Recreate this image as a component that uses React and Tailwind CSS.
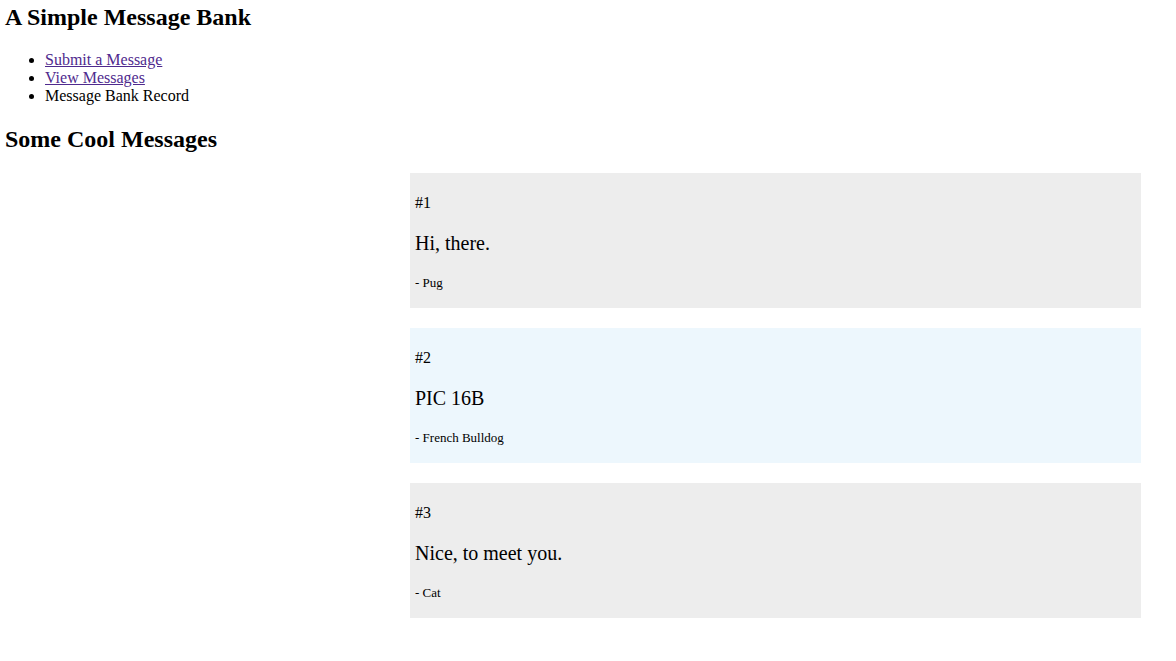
import React from "react";

const messages = [
  { id: 1, text: "Hi, there.", author: "Pug", bg: "bg-[#ededed]" },
  { id: 2, text: "PIC 16B", author: "French Bulldog", bg: "bg-[#edf7fd]" },
  { id: 3, text: "Nice, to meet you.", author: "Cat", bg: "bg-[#ededed]" },
];

const App = () => {
  return (
    <div className="min-h-screen bg-white px-[5px] pt-[4px] font-['Liberation_Serif','Times_New_Roman',serif] text-black">
      <h1 className="text-[24px] font-bold leading-[27px]">A Simple Message Bank</h1>
      <ul className="mt-[20px] list-disc pl-[40px] text-[16px] leading-[18px]">
        <li>
          <a href="#" className="text-[#4f2a8e] underline">
            Submit a Message
          </a>
        </li>
        <li>
          <a href="#" className="text-[#4f2a8e] underline">
            View Messages
          </a>
        </li>
        <li>Message Bank Record</li>
      </ul>
      <h2 className="mt-[21px] text-[24px] font-bold leading-[27px]">Some Cool Messages</h2>

      <div className="ml-[405px] mt-[20px] flex w-[731px] flex-col gap-[20px]">
        {messages.map((m) => (
          <div key={m.id} className={`${m.bg} px-[5px] pt-[21px] pb-[18px]`}>
            <p className="text-[16px] leading-[18px]">#{m.id}</p>
            <p className="mt-[20px] text-[20px] leading-[23px]">{m.text}</p>
            <p className="mt-[20px] text-[13px] leading-[15px]">- {m.author}</p>
          </div>
        ))}
      </div>
    </div>
  );
};

export default App;
